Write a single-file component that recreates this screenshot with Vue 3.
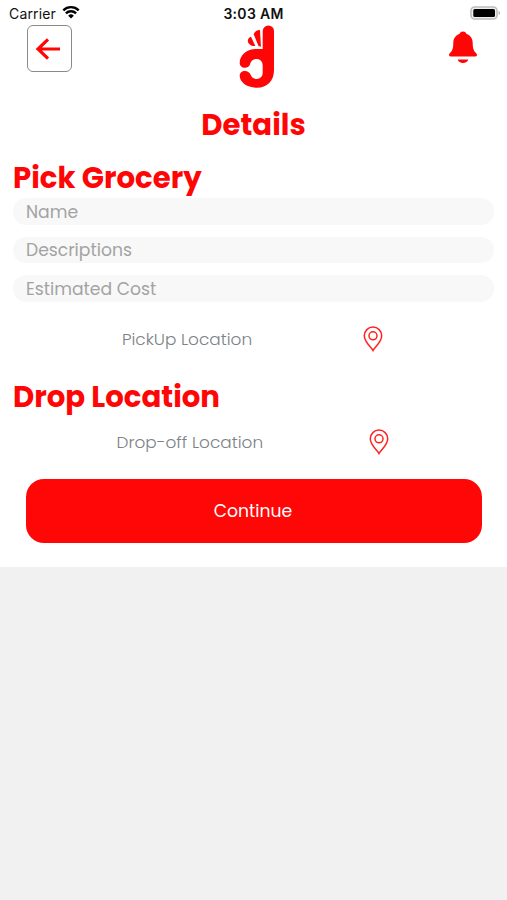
<template>
  <div class="screen">
    <div class="status-bar">
      <div class="carrier">
        <span class="carrier-name">Carrier</span>
        <svg class="wifi" viewBox="0 0 18 14">
          <path d="M1.300 5.300a11 11 0 0 1 15.400 0" />
          <path d="M3.900 8.400a7.200 7.200 0 0 1 10.200 0" />
          <path class="wifi-dot" d="M9 13.600 6.200 10.700a4 4 0 0 1 5.600 0z" />
        </svg>
      </div>
      <span class="clock">3:03 AM</span>
      <svg class="battery" viewBox="0 0 31 14">
        <rect x="1" y="1" width="26" height="12" rx="3.6" fill="#eee" stroke="#bdbdbd" stroke-width="1.6" />
        <rect x="3.300" y="3" width="21.700" height="8" rx="1.500" fill="#000" />
        <path d="M28.600 5c1.800.6 1.800 3.400 0 4z" fill="#aaa" />
      </svg>
    </div>

    <header class="header">
      <button class="back-btn" @click="goBack">
        <svg viewBox="0 0 26 24">
          <path d="M13 2.400 3 12l10 9.600M3 12h22" />
        </svg>
      </button>
      <svg class="logo" viewBox="0 0 36 64">
        <path d="M29.300.5A5.600 5.600 0 0 1 35 6.100V45c0 11-7 17.700-17 17.700S.7 57 .7 50.700c0-3 2.300-4.800 5.100-4.800 3.200 0 5 1.800 5.700 3.600 1 3 3.500 4.400 6.200 4.400 3.800 0 6-2.900 6-5.900v-7.500c0-4-2.700-6.500-6-6.500-3.700 0-5.700 2-6.400 4.500-.8 3-2.800 4.300-5.300 4.300C3 42.800.7 41 .7 38 .7 30 8 24 17 24h6.700V6.100A5.600 5.600 0 0 1 29.300.5z" />
        <path d="M8.800 16c0-2 1.400-3.800 3.200-4.200L16.300 21C12.500 21.500 9 19 8.800 16z" />
        <path d="M14.800 9.600C15.400 6.600 17.800 4.800 21 4.900L21.900 21.700 19.500 21z" />
      </svg>
      <svg class="bell" viewBox="0 0 30 34">
        <path d="M15 .5c-1.600 0-2.700.9-3.400 2.200C7.500 4.500 5.300 7.500 5.300 12c0 6-1.200 8-3.700 10.500-1.200 1.300-.6 3 1.100 3h24.600c1.700 0 2.300-1.700 1.100-3-2.500-2.500-3.700-4.500-3.700-10.500 0-4.500-2.200-7.500-6.300-9.300C17.700 1.400 16.600.5 15 .5z" />
        <path d="M9.700 28.500h10.600c-.6 2.200-2.700 3.400-5.300 3.400s-4.700-1.200-5.300-3.400z" />
      </svg>
    </header>

    <h1 class="title">Details</h1>

    <section class="pick">
      <h2 class="heading">Pick Grocery</h2>
      <div class="fields">
        <input
          v-for="field in fields"
          :key="field.key"
          v-model="form[field.key]"
          class="field"
          :placeholder="field.label"
        />
      </div>
      <div class="location">
        <span class="location-text">PickUp Location</span>
        <svg class="pin" viewBox="0 0 20 26">
          <path d="M10 24.500C8.500 21.200 1.300 16.500 1.300 9.800a8.700 8.700 0 0 1 17.400 0C18.700 16.500 11.500 21.200 10 24.500z" />
          <circle cx="10" cy="9.800" r="4" />
        </svg>
      </div>
    </section>

    <section class="drop">
      <h2 class="heading">Drop Location</h2>
      <div class="location">
        <span class="location-text">Drop-off Location</span>
        <svg class="pin" viewBox="0 0 20 26">
          <path d="M10 24.500C8.500 21.200 1.300 16.500 1.300 9.800a8.700 8.700 0 0 1 17.400 0C18.700 16.500 11.500 21.200 10 24.500z" />
          <circle cx="10" cy="9.800" r="4" />
        </svg>
      </div>
    </section>

    <button class="continue-btn">Continue</button>
  </div>
</template>

<script setup>
import { reactive } from 'vue'

const fields = [
  { key: 'name', label: 'Name' },
  { key: 'descriptions', label: 'Descriptions' },
  { key: 'cost', label: 'Estimated Cost' }
]

const form = reactive({
  name: '',
  descriptions: '',
  cost: ''
})

const goBack = () => {
  window.history.back()
}
</script>

<style>
body {
  margin: 0;
  background: #f1f1f1;
}
</style>

<style scoped>
.screen {
  box-sizing: border-box;
  height: 567px;
  background: #fff;
  font-family: Poppins, Inter, 'Liberation Sans', sans-serif;
  overflow: hidden;
}

.status-bar {
  display: grid;
  grid-template-columns: 1fr auto 1fr;
  align-items: center;
  height: 25px;
  padding: 1px 6px 0 9px;
  box-sizing: border-box;
  font-family: Inter, sans-serif;
  font-size: 14px;
  color: #111;
}

.carrier {
  display: flex;
  align-items: center;
  gap: 6px;
}

.carrier-name {
  letter-spacing: 0.15px;
}

.wifi {
  width: 18px;
  height: 14px;
  margin-top: -2px;
  fill: none;
  stroke: #000;
  stroke-width: 2.4;
}

.wifi .wifi-dot {
  fill: #000;
  stroke: none;
}

.clock {
  margin-right: 3px;
  font-weight: 600;
  letter-spacing: 0.3px;
}

.battery {
  width: 31px;
  height: 14px;
  justify-self: end;
}

.header {
  display: grid;
  grid-template-columns: 1fr 36px 1fr;
  align-items: start;
  height: 64px;
  padding: 0 29px 0 27px;
}

.back-btn {
  display: flex;
  align-items: center;
  justify-content: center;
  box-sizing: border-box;
  width: 45px;
  height: 47px;
  padding: 0 3px 0 0;
  border: 1px solid #8a8a8a;
  border-radius: 6px;
  background: #fff;
  cursor: pointer;
}

.back-btn svg {
  width: 26px;
  height: 24px;
  fill: none;
  stroke: #ff0505;
  stroke-width: 3.2;
}

.logo {
  width: 36px;
  height: 64px;
  margin-left: 4.5px;
  fill: #ff0505;
}

.bell {
  justify-self: end;
  width: 30px;
  height: 34px;
  margin-top: 6px;
  fill: #ff0505;
}

.title {
  margin: 15px 0 0;
  height: 42px;
  line-height: 42px;
  font-size: 29.2px;
  font-weight: 700;
  text-align: center;
  color: #ff0505;
}

.heading {
  margin: 0;
  height: 42px;
  line-height: 42px;
  font-size: 29.2px;
  font-weight: 700;
  color: #ff0505;
}

.pick {
  padding: 11px 13px 0;
}

.fields {
  display: flex;
  flex-direction: column;
  gap: 12px;
  margin-top: -1px;
}

.field {
  display: block;
  box-sizing: border-box;
  width: 100%;
  height: 26.6px;
  padding: 1px 13px 0;
  border: none;
  border-radius: 13px;
  outline: none;
  background: #f8f8f8;
  font-family: inherit;
  font-size: 17.2px;
  font-weight: 400;
  color: #333;
}

.field::placeholder {
  color: #a3a3a3;
  opacity: 1;
}

.location {
  display: flex;
  align-items: center;
  justify-content: space-evenly;
  height: 28px;
  font-size: 16.9px;
  font-weight: 300;
  color: #7d8286;
}

.location-text {
  margin-left: -2px;
}

.pick .location {
  margin-top: 23.2px;
}

.pin {
  flex: none;
  width: 20px;
  height: 26px;
  fill: none;
  stroke: #f22;
  stroke-width: 1.5;
}

.drop {
  padding: 23px 13px 0;
}

.drop .location {
  margin-top: 10px;
}

.continue-btn {
  display: block;
  width: 456px;
  height: 64px;
  margin: 23px auto 0 26px;
  padding: 0 2px 0 0;
  border: none;
  border-radius: 18px;
  background: #ff0707;
  font-family: inherit;
  font-size: 17.2px;
  font-weight: 400;
  color: #fff;
  cursor: pointer;
}
</style>
